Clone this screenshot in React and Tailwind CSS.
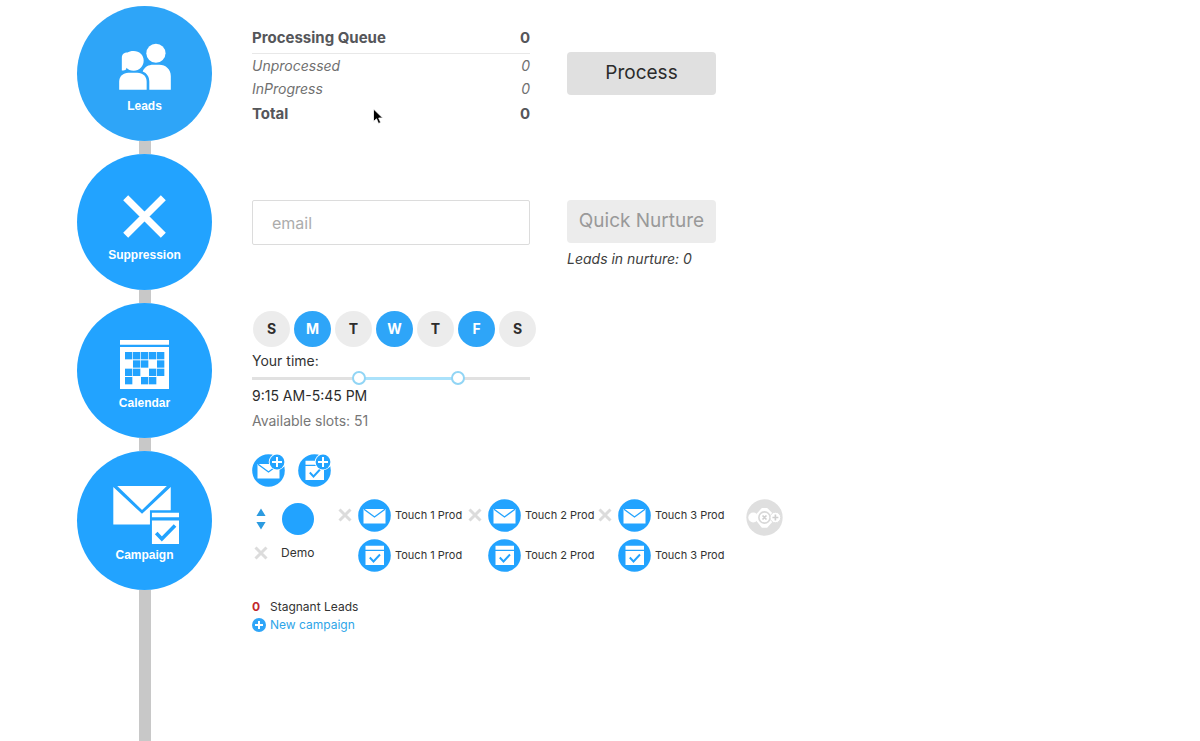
import { useState } from "react";
import { clsx } from "clsx";

function LeadsIcon() {
  return (
    <svg viewBox="148 128 156 142" className="h-[47px] w-[52px]" fill="#fff" aria-hidden="true">
      <circle cx="259" cy="159" r="29" />
      <path d="M219 214c6-14 18-20 32-20h18c20 0 35 14 35 34v41h-65v-24c0-15-7-26-20-31z" />
      <path d="M156 211v-38c0-11 7-16 17-16 4-3 10-5 19-5 17 0 30 12 30 29 0 18-13 31-30 31-10 0-17-3-22-9l-1 4c-3 3-7 4-13 4z" />
      <path d="M148 269v-24c0-16 12-27 28-27h27c16 0 28 11 28 27v24z" />
    </svg>
  );
}

function SuppressionIcon() {
  return (
    <svg viewBox="160 136 128 128" className="size-[43px]" aria-hidden="true">
      <path d="M168 144l112 112M280 144L168 256" stroke="#fff" strokeWidth="21" fill="none" />
    </svg>
  );
}

const CALENDAR_CELLS = ["11111", "01101", "11011", "10110"];

function CalendarIcon() {
  return (
    <svg viewBox="150 120 147 147" className="size-[49px]" aria-hidden="true">
      <path fill="#fff" d="M150 120h147v14H150zM150 141h147v126H150z" />
      {CALENDAR_CELLS.map((row, r) =>
        [...row].map((on, c) =>
          on === "1" ? (
            <rect key={`${r}${c}`} x={165 + c * 24} y={156 + r * 25} width="22" height="22" fill="#22a3ff" />
          ) : null
        )
      )}
    </svg>
  );
}

function CampaignIcon() {
  return (
    <svg viewBox="125 118 206 179" className="h-[60px] w-[68px]" aria-hidden="true">
      <path fill="#fff" d="M144 120h150l-75 72z" />
      <path fill="#fff" d="M132 123l87 81 87-81v70h-63v43H132z" />
      <path fill="#fff" d="M249 201h83v13h-83zM249 224h83v71h-83z" />
      <path d="M262 262l17 18 40-41" stroke="#22a3ff" strokeWidth="11" fill="none" />
    </svg>
  );
}

function MailGlyph() {
  return (
    <>
      <path fill="#fff" d="M5.500 10h22v14.500h-22z" />
      <path d="M6 10.300l10.500 7.700L27 10.300" stroke="#22a3ff" strokeWidth="1.400" fill="none" />
    </>
  );
}

function TaskGlyph() {
  return (
    <>
      <path fill="#fff" d="M7.500 6.700h18.500v4H7.500zM7.500 12h18.500v14H7.500z" />
      <path d="M11.800 18.500l3.700 4L22 15.500" stroke="#22a3ff" strokeWidth="1.900" fill="none" />
    </>
  );
}

function StepIcon({ kind }) {
  return (
    <svg viewBox="0 0 33 33" className="size-[33px] shrink-0" aria-hidden="true">
      <circle cx="16.500" cy="16.500" r="16.300" fill="#22a3ff" />
      {kind === "mail" ? <MailGlyph /> : <TaskGlyph />}
    </svg>
  );
}

function AddIcon({ kind }) {
  return (
    <svg viewBox="0 0 33 33" className="size-[33px]" aria-hidden="true">
      <circle cx="16.500" cy="16.500" r="16.300" fill="#22a3ff" />
      {kind === "mail" ? <MailGlyph /> : <TaskGlyph />}
      <circle cx="25" cy="8" r="8.300" fill="#fff" />
      <circle cx="25" cy="8" r="7.400" fill="#22a3ff" />
      <path d="M25 3v10M20 8h10" stroke="#fff" strokeWidth="2" />
    </svg>
  );
}

function Cross() {
  return (
    <svg viewBox="0 0 14 14" className="size-3.5" aria-hidden="true">
      <path d="M1.500 1.500l11 11M12.500 1.500l-11 11" stroke="#dcdcdc" strokeWidth="3" />
    </svg>
  );
}

const STAGES = [
  { label: "Leads", Icon: LeadsIcon, disc: "h-[135px] bg-[#2ea5f8] pb-[27px] gap-2" },
  { label: "Suppression", Icon: SuppressionIcon, disc: "h-[136px] bg-[#22a3ff] pb-[27px] gap-[9px]" },
  { label: "Calendar", Icon: CalendarIcon, disc: "h-[135px] bg-[#22a3ff] pb-[27px] gap-1.5" },
  { label: "Campaign", Icon: CampaignIcon, disc: "h-[139px] bg-[#22a3ff] pb-[27px] gap-0.5" },
];

function StageNav() {
  return (
    <nav className="flex w-[135px] shrink-0 flex-col items-center pt-1.5">
      {STAGES.map(({ label, Icon, disc }) => (
        <div key={label} className="flex w-full flex-col items-center last:grow">
          <a
            href={`#${label.toLowerCase()}`}
            className={clsx(
              "flex w-full flex-col items-center justify-end rounded-[50%] font-['Liberation_Sans',sans-serif] text-xs leading-4 font-bold text-white",
              disc
            )}
          >
            <Icon />
            {label}
          </a>
          <div className="min-h-[13px] w-3 grow bg-[#c8c8c8]" />
        </div>
      ))}
    </nav>
  );
}

function QueueTable() {
  return (
    <table className="w-[278px] text-[15px] leading-5 text-[#55565a]">
      <thead>
        <tr className="h-[29px] border-b border-[#e8e8e8]">
          <th className="text-left font-bold">Processing Queue</th>
          <th className="text-right font-bold">0</th>
        </tr>
      </thead>
      <tbody className="text-sm text-[#707070] italic">
        <tr className="h-[25px]">
          <td>Unprocessed</td>
          <td className="text-right">0</td>
        </tr>
        <tr className="h-[22px]">
          <td>InProgress</td>
          <td className="text-right">0</td>
        </tr>
      </tbody>
      <tfoot>
        <tr className="h-7">
          <th className="text-left font-bold">Total</th>
          <td className="text-right font-bold">0</td>
        </tr>
      </tfoot>
    </table>
  );
}

function DayPicker() {
  const [days, setDays] = useState([false, true, false, true, false, true, false]);
  return (
    <div className="flex gap-1 pl-px">
      {[..."SMTWTFS"].map((d, i) => (
        <button
          key={i}
          type="button"
          aria-pressed={days[i]}
          onClick={() => setDays(days.map((v, j) => (j === i ? !v : v)))}
          className={clsx(
            "h-9 w-[37px] rounded-[50%] text-sm font-bold",
            days[i] ? "bg-[#2ea5f8] text-white" : "bg-[#ececec] text-[#2d2d2d]"
          )}
        >
          {d}
        </button>
      ))}
    </div>
  );
}

const THUMB =
  "pointer-events-none absolute inset-y-0 -left-[7px] w-[calc(100%+14px)] appearance-none bg-transparent [&::-webkit-slider-thumb]:pointer-events-auto [&::-webkit-slider-thumb]:size-3.5 [&::-webkit-slider-thumb]:appearance-none [&::-webkit-slider-thumb]:rounded-full [&::-webkit-slider-thumb]:border-2 [&::-webkit-slider-thumb]:border-[#91d5f5] [&::-webkit-slider-thumb]:bg-white";

function formatTime(quarter) {
  const h = Math.floor(quarter / 4);
  const m = String((quarter % 4) * 15).padStart(2, "0");
  return `${h % 12 || 12}:${m} ${h % 24 < 12 ? "AM" : "PM"}`;
}

function TimeRange() {
  const [from, setFrom] = useState(37);
  const [to, setTo] = useState(71);
  return (
    <div className="w-[278px] text-sm">
      <p className="pt-1 leading-5 text-[#333]">Your time:</p>
      <div className="relative flex h-3.5 items-center">
        <div className="h-[3px] w-full bg-[#e1e1e1]">
          <div
            className="h-full bg-[#abe2fb]"
            style={{ marginLeft: `${(from / 96) * 100}%`, width: `${((to - from) / 96) * 100}%` }}
          />
        </div>
        <input type="range" aria-label="Start time" min="0" max="96" value={from} onChange={(e) => setFrom(Math.min(+e.target.value, to))} className={THUMB} />
        <input type="range" aria-label="End time" min="0" max="96" value={to} onChange={(e) => setTo(Math.max(+e.target.value, from))} className={THUMB} />
      </div>
      <p className="leading-[22px] text-[#2b2b2b]">
        {formatTime(from)}-{formatTime(to)}
      </p>
      <p className="pt-0.5 leading-6 text-[#777]">Available slots: 51</p>
    </div>
  );
}

function Touch({ n }) {
  return (
    <li className="flex w-[130px] gap-1.5">
      <button type="button" aria-label={`Remove touch ${n}`} className="mt-[9px] h-3.5">
        <Cross />
      </button>
      <div className="flex flex-col gap-[7px] text-[11px] whitespace-nowrap text-[#333]">
        {["mail", "task"].map((kind) => (
          <a key={kind} href={`#touch-${n}-${kind}`} className="flex items-center gap-1">
            <StepIcon kind={kind} />
            Touch {n} Prod
          </a>
        ))}
      </div>
    </li>
  );
}

function CampaignRow() {
  return (
    <div className="flex items-start">
      <div className="grid w-[86px] grid-cols-[18px_1fr] items-center gap-y-2 pt-1">
        <button type="button" aria-label="Reorder campaign" className="flex justify-center">
          <svg viewBox="0 0 10 22" className="h-[22px] w-2.5" aria-hidden="true">
            <path d="M5 0.500l4.600 7.500H.4zM5 21.500l-4.600-7.500h9.200z" fill="#2c9be0" />
          </svg>
        </button>
        <span className="ml-3 size-8 rounded-full bg-[#22a3ff]" />
        <button type="button" aria-label="Remove campaign" className="flex justify-center">
          <Cross />
        </button>
        <span className="ml-[11px] text-xs leading-5 text-[#333]">Demo</span>
      </div>
      <ol className="flex">
        {[1, 2, 3].map((n) => (
          <Touch key={n} n={n} />
        ))}
      </ol>
      <button type="button" aria-label="Add touch" className="ml-[18px]">
        <svg viewBox="0 0 112 112" className="size-[37px]" aria-hidden="true">
          <circle cx="56" cy="56" r="55" fill="#dfdfdf" />
          <circle cx="22" cy="56" r="15" fill="#fff" />
          <path d="M48 27h16l17 17v24L64 87H48L33 68V44z" fill="#fff" />
          <circle cx="56" cy="56" r="17" fill="#fff" stroke="#d8d8d8" strokeWidth="5" />
          <circle cx="89" cy="56" r="16" fill="#fff" stroke="#dfdfdf" strokeWidth="3" />
          <path d="M50 50l12 12M62 50L50 62M89 47v18M80 56h18" stroke="#cfcfcf" strokeWidth="5" />
        </svg>
      </button>
    </div>
  );
}

export default function App() {
  return (
    <div className="flex min-h-screen gap-10 bg-white pl-[77px] font-[Inter,'Liberation_Sans',sans-serif]">
      <StageNav />
      <main className="min-w-0 grow pt-6">
        <section id="leads" className="relative flex items-start gap-[37px]">
          <QueueTable />
          <button type="button" className="mt-7 h-[43px] w-[149px] rounded-sm bg-[#e0e0e0] text-[19px] text-[#2b2b2b]">
            Process
          </button>
          <svg viewBox="0 0 12 18" className="absolute top-[84px] left-[120px] h-[18px] w-3" aria-hidden="true">
            <path d="M1.500 1v12.500l3-2.700 2 4.700 2.200-1-2-4.500h4z" fill="#000" stroke="#fff" strokeWidth="0.800" />
          </svg>
        </section>

        <section id="suppression" className="flex items-start gap-[37px] pt-[72px]">
          <input
            type="email"
            aria-label="Email address"
            placeholder="email"
            className="block h-[45px] w-[278px] rounded-xs border border-[#dcdcdc] px-[19px] text-base text-[#333] outline-none placeholder:text-[#acacac]"
          />
          <div className="w-[149px]">
            <button type="button" disabled className="h-[43px] w-full rounded-sm bg-[#ececec] text-[19px] text-[#999]">
              Quick Nurture
            </button>
            <p className="pt-1.5 text-sm leading-5 text-[#404040] italic">Leads in nurture: 0</p>
          </div>
        </section>

        <section id="calendar" className="pt-[42px]">
          <DayPicker />
          <TimeRange />
        </section>

        <section id="campaign" className="pt-[21px]">
          <div className="flex gap-[13px]">
            <button type="button" aria-label="Add email">
              <AddIcon kind="mail" />
            </button>
            <button type="button" aria-label="Add task">
              <AddIcon kind="task" />
            </button>
          </div>
          <div className="pt-3">
            <CampaignRow />
          </div>
          <div className="flex flex-col items-start pt-[26px] text-xs leading-[18px]">
            <p className="flex text-[#333]">
              <span className="w-[18px] font-bold text-[#c1272d]">0</span>Stagnant Leads
            </p>
            <a href="#new-campaign" className="flex items-center gap-1 text-[#2ea5e8]">
              <svg viewBox="0 0 14 14" className="size-3.5" aria-hidden="true">
                <circle cx="7" cy="7" r="7" fill="#2ea5f8" />
                <path d="M7 3v8M3 7h8" stroke="#fff" strokeWidth="2" />
              </svg>
              New campaign
            </a>
          </div>
        </section>
      </main>
    </div>
  );
}
